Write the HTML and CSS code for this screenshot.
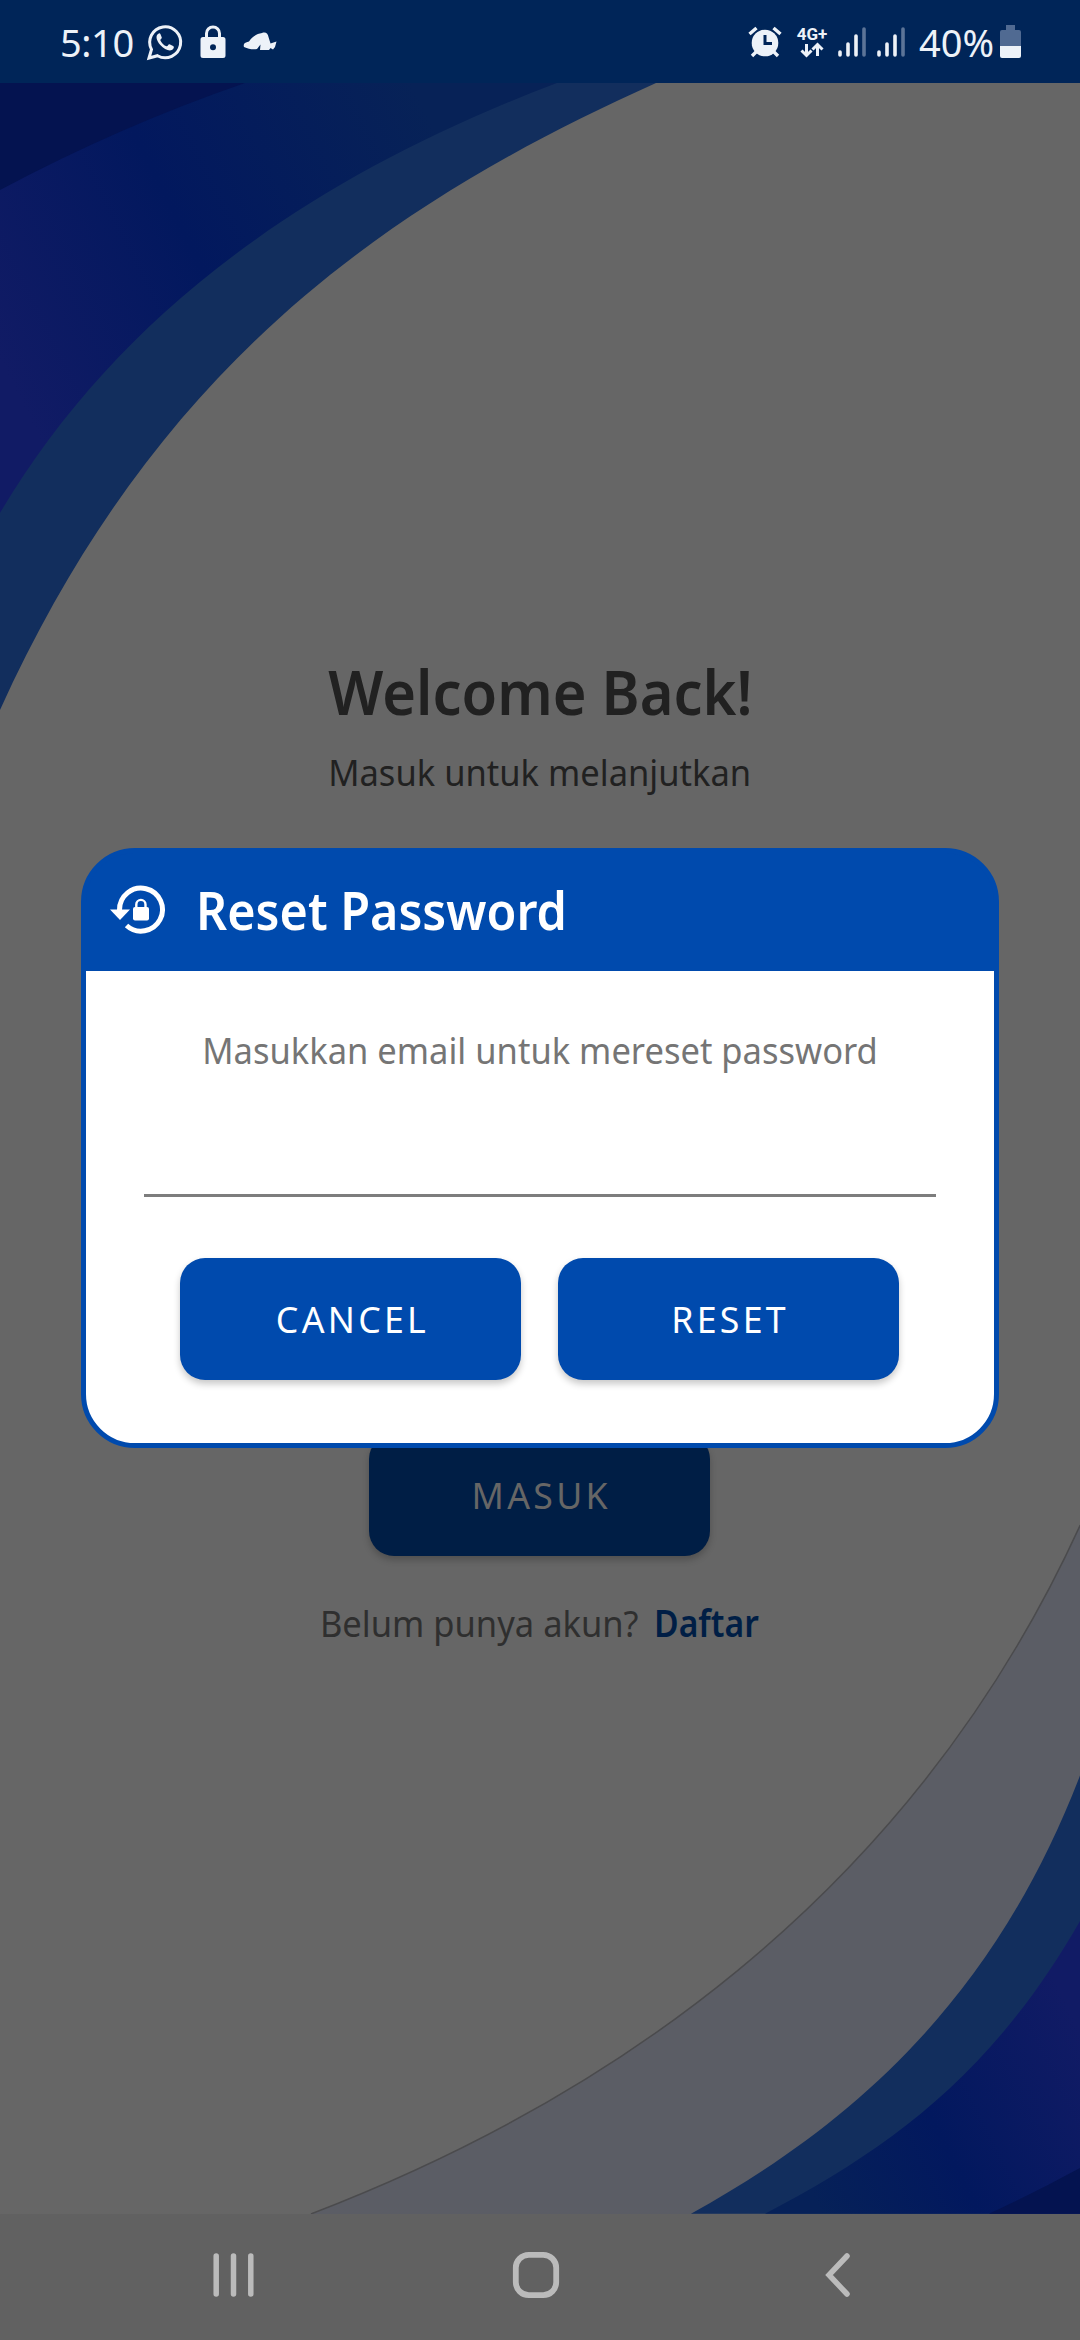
FILE: index.html
```html
<!DOCTYPE html>
<html lang="id">
<head>
<meta charset="utf-8">
<title>Reset Password</title>
<link rel="stylesheet" href="styles.css">
</head>
<body>
<div class="phone">
  <header class="status">
    <div class="status-left">
      <span class="clock">5:10</span>
      <svg class="ic-wa" viewBox="0 0 36 36"><path d="M2 34l2.500-8.500A15.500 15.500 0 1 1 10.500 31.700z" fill="none" stroke="#edf2f8" stroke-width="3"/><path d="M11.800 9.500c-3.500 1.500-3 6.500 1.500 11.500s10.500 7.200 13 3.800c.9-1.500.7-2.300-.2-2.800l-3.600-1.800c-1.200-.5-1.500 2.300-3 2-2.500-.8-5-3.300-6.100-5.800-.4-1.200 1.700-1.600 1.400-2.800l-1.400-3.500c-.3-.7-.9-.9-1.600-.6z" fill="#edf2f8"/></svg>
      <svg class="ic-lock" viewBox="0 0 26 34"><path d="M6.500 14V8.500a6.500 6.500 0 0 1 13 0V14" fill="none" stroke="#edf2f8" stroke-width="3"/><path fill-rule="evenodd" d="M3 12h20a2.500 2.500 0 0 1 2.500 2.500v16A2.500 2.500 0 0 1 23 33H3a2.500 2.500 0 0 1-2.500-2.500v-16A2.500 2.500 0 0 1 3 12zm10 7.200a3 3 0 1 0 0 6 3 3 0 0 0 0-6z" fill="#edf2f8"/></svg>
      <svg class="ic-cap" viewBox="0 0 34 20"><path d="M1 15c-1-3 .5-4.500 5-5.500C9 5 14 1.500 19 1c4-1.500 6 1 6.500 4l2 6.500 6-2-1.500 5.500-2 2.500-2.500-1.500-1.500 2h-9l.5-5.500-3.500 4.500c-4 .8-8 .3-13-2z" fill="#edf2f8"/></svg>
    </div>
    <div class="status-right">
      <svg class="ic-alarm" viewBox="0 0 34 32"><circle cx="17" cy="17" r="13.300" fill="#edf2f8"/><path d="M1.500 8l7-6M32.500 8l-7-6M4 30l5-5M30 30l-5-5" stroke="#edf2f8" stroke-width="3.400"/><path d="M17 9v8.500h7" fill="none" stroke="#002558" stroke-width="3"/></svg>
      <div class="net"><span class="net-label">4G+</span>
        <svg class="ic-arrows" viewBox="0 0 24 14"><path d="M6.500 1v11M1.500 7.500l5 5 5-5M17.500 13V2M12.500 6.500l5-5 5 5" fill="none" stroke="#edf2f8" stroke-width="3"/></svg></div>
      <svg class="ic-signal" viewBox="0 0 28 30"><path d="M2 25v3M10 17v11M18 9v19" stroke="#edf2f8" stroke-width="3.600" stroke-linecap="round"/><path d="M26 2v26" stroke="#5c7497" stroke-width="3.600" stroke-linecap="round"/></svg>
      <svg class="ic-signal ic-signal-two" viewBox="0 0 28 30"><path d="M2 25v3M10 17v11M18 9v19" stroke="#edf2f8" stroke-width="3.600" stroke-linecap="round"/><path d="M26 2v26" stroke="#5c7497" stroke-width="3.600" stroke-linecap="round"/></svg>
      <span class="percent">40%</span>
      <svg class="ic-batt" viewBox="0 0 21 33"><path d="M6 0h9v5h4a2 2 0 0 1 2 2v14H0V7a2 2 0 0 1 2-2h4z" fill="#506a92"/><path d="M0 21h21v10a2 2 0 0 1-2 2H2a2 2 0 0 1-2-2z" fill="#edf2f8"/></svg>
    </div>
  </header>
  <main class="screen">
    <svg class="backdrop" viewBox="0 83 1080 2131" preserveAspectRatio="none">
      <defs>
        <linearGradient id="top" gradientUnits="userSpaceOnUse" x1="0" y1="360" x2="440" y2="140"><stop offset="0" stop-color="#111b65"/><stop offset=".45" stop-color="#02185e"/><stop offset="1" stop-color="#072257"/></linearGradient>
        <linearGradient id="bottom" gradientUnits="userSpaceOnUse" x1="1080" y1="2030" x2="800" y2="2170"><stop offset="0" stop-color="#111b65"/><stop offset=".55" stop-color="#02185e"/><stop offset="1" stop-color="#062158"/></linearGradient>
      </defs>
      <path class="wave-blue" d="M0 83H656C377 208 153 372.500 0 710z"/>
      <path d="M0 83H557C288 185 110 328 0 513z" fill="url(#top)"/>
      <path class="wave-dark" d="M0 83H245Q120 126 0 190z"/>
      <path class="wave-grey" d="M1080 1525.600C907 1904 596 2104.500 311.600 2213.700V2216H1082V1525z"/>
      <path class="wave-blue" d="M1080 1775.600C996 1994 859 2121 691 2213.700H1080z"/>
      <path d="M1080 1921C993 2073 891 2148 765 2213.700H1080z" fill="url(#bottom)"/>
      <path class="wave-dark" d="M1080 2168Q1036 2192 989 2213.700H1080z"/>
    </svg>
    <div class="login">
      <h1 class="welcome"><span class="fit">Welcome Back!</span></h1>
      <p class="subtitle"><span class="fit">Masuk untuk melanjutkan</span></p>
      <div class="button button-dim"><span class="caps">MASUK</span></div>
      <p class="signup"><span class="fit from-right">Belum punya akun?</span><b class="fit from-left daftar">Daftar</b></p>
    </div>
    <section class="dialog">
      <div class="dialog-head">
        <svg class="ic-reset" viewBox="0 0 55 49"><path d="M9.500 25A21.500 21.500 0 1 1 16.500 40.500" fill="none" stroke="#fff" stroke-width="5"/><path d="M0 24.500h20l-10 10.500z" fill="#fff"/><path d="M26.300 25v-5.500a4.600 4.600 0 0 1 9.200 0V25" fill="none" stroke="#fff" stroke-width="2.400"/><rect x="23" y="22" width="16" height="13.500" rx="2" fill="#fff"/></svg>
        <h2 class="dialog-title"><span class="fit from-left">Reset Password</span></h2>
      </div>
      <div class="dialog-body">
        <p class="prompt"><span class="fit">Masukkan email untuk mereset password</span></p>
        <div class="field"></div>
        <div class="actions"><div class="button"><span class="caps">CANCEL</span></div><div class="button"><span class="caps">RESET</span></div></div>
      </div>
    </section>
  </main>
  <nav class="navbar">
    <svg class="nav-ic" viewBox="0 0 48 48"><path d="M6.200 5v38M23.500 5v38M40.800 5v38" stroke="#bbb" stroke-width="5.500" stroke-linecap="round"/></svg>
    <svg class="nav-ic" viewBox="0 0 48 48"><rect x="3.800" y="3.800" width="40.400" height="40.400" rx="13" fill="none" stroke="#bbb" stroke-width="5.800"/></svg>
    <svg class="nav-ic" viewBox="0 0 48 48"><path d="M33 5L15 24l18 19" fill="none" stroke="#bbb" stroke-width="5.500" stroke-linecap="round"/></svg>
  </nav>
</div>
</body>
</html>
```

FILE: styles.css
```css
* { box-sizing: border-box; }
body { margin: 0; }
h1, h2, p { margin: 0; font-weight: 400; }
svg { display: block; flex: none; overflow: visible; }
.phone { display: flex; flex-direction: column; width: 1080px; height: 2340px; overflow: hidden; background: #666; font-family: "Noto Sans", sans-serif; }
.fit { display: inline-block; white-space: nowrap; transform: scaleX(.933); }
.from-left { transform-origin: left; }
.from-right { transform-origin: right; }
.caps { display: inline-block; white-space: nowrap; transform: translate(2px, -1px) scaleX(.965); }
.status { display: flex; justify-content: space-between; height: 83px; padding: 0 59px 0 60px; background: #002558; color: #edf2f8; font-size: 38px; }
.status-left, .status-right { display: flex; align-items: center; height: 83px; }
.clock { width: 75px; white-space: nowrap; letter-spacing: -.4px; }
.ic-wa { width: 36px; height: 36px; margin-left: 12px; }
.ic-lock { width: 26px; height: 34px; margin-left: 17px; }
.ic-cap { width: 34px; height: 20px; margin-left: 17px; }
.ic-alarm { width: 34px; height: 32px; }
.net { display: flex; flex-direction: column; align-items: center; width: 34px; margin-left: 13px; }
.net-label { font: 700 17px/17px Roboto, sans-serif; }
.ic-arrows { width: 24px; height: 14px; }
.ic-signal { width: 28px; height: 30px; margin-left: 9px; }
.ic-signal-two { margin-left: 11px; }
.percent { width: 76px; margin-left: 14px; letter-spacing: 0; white-space: nowrap; }
.ic-batt { width: 21px; height: 33px; margin-left: 5px; }
.screen { position: relative; height: 2131px; overflow: hidden; }
.backdrop { position: absolute; inset: 0; width: 1080px; height: 2131px; }
.wave-blue { fill: #122e5d; }
.wave-dark { fill: #041350; }
.wave-grey { fill: #5b5d65; stroke: #4b4b4d; stroke-width: 1.500; }
.login { position: relative; display: flex; flex-direction: column; align-items: center; padding-top: 563px; color: #212121; }
.welcome { height: 91px; font-size: 62px; line-height: 90px; font-weight: 600; }
.subtitle { height: 70px; font-size: 37px; line-height: 70px; }
.button { display: flex; align-items: center; justify-content: center; width: 341px; height: 122px; border-radius: 25px; background: #004aad; color: #fff; font-size: 37px; letter-spacing: 3.400px; box-shadow: 0 4px 7px rgba(0,0,0,.22); }
.button-dim { margin: 627px 1px 0 0; background: #001e45; color: #666; }
.signup { display: flex; gap: 16px; margin: 37px 14px 0 0; height: 60px; font-size: 37px; line-height: 60px; color: #2f2f2f; }
.daftar { color: #001e45; font-weight: 600; transform: scaleX(.91); }
.dialog { position: absolute; left: 81px; top: 765px; width: 918px; height: 600px; overflow: hidden; border: 5px solid #004aad; border-radius: 54px; background: linear-gradient(#004aad 118px, #fff 118px); }
.dialog-head { display: flex; align-items: center; gap: 31px; height: 118px; padding: 0 0 5px 24px; color: #fff; }
.ic-reset { width: 55px; height: 49px; }
.dialog-title { font-size: 52px; line-height: 114px; font-weight: 600; }
.dialog-body { display: flex; flex-direction: column; align-items: center; padding-top: 49px; }
.prompt { height: 61px; font-size: 37px; line-height: 60px; color: #757575; }
.field { width: 792px; height: 116px; border-bottom: 3px solid #7d7d7d; }
.actions { display: flex; gap: 37px; margin: 61px 1px 0 0; }
.navbar { display: flex; align-items: center; justify-content: space-between; height: 126px; padding: 0 218px 4px 210px; background: #616161; }
.nav-ic { width: 48px; height: 48px; }
```
